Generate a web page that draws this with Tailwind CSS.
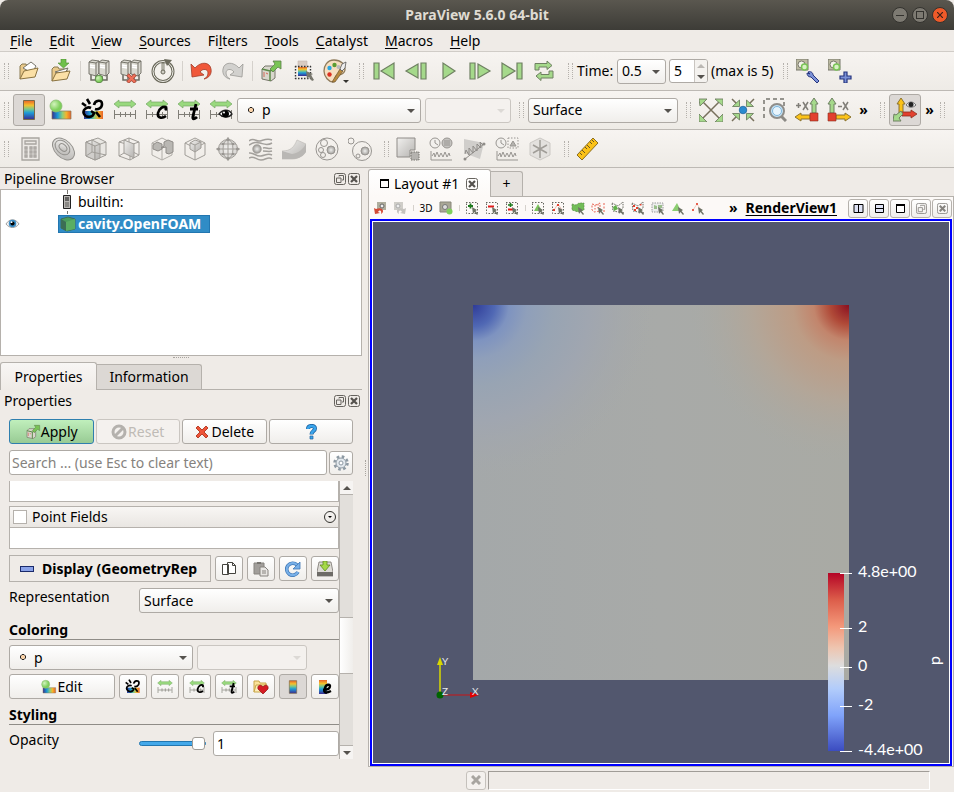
<!DOCTYPE html>
<html lang="en">
<head>
  <meta charset="UTF-8">
  <title>ParaView 5.6.0 64-bit</title>
  <script src="https://cdn.jsdelivr.net/npm/@tailwindcss/browser@4"></script>
</head>
<body class="min-h-screen flex flex-col bg-[#efebe7] text-black text-[14px] leading-5 font-['Noto_Sans','Open_Sans',sans-serif]">

  <!-- icon sprites -->
  <svg class="absolute size-0" aria-hidden="true">
    <defs>
      <linearGradient id="jet" x1="0" y1="0" x2="0" y2="1"><stop offset="0" stop-color="#e8622a"/><stop offset=".25" stop-color="#f5c02c"/><stop offset=".45" stop-color="#7ac98a"/><stop offset=".65" stop-color="#1d9bd8"/><stop offset="1" stop-color="#3b2a90"/></linearGradient>
      <linearGradient id="jetH" x1="0" y1="0" x2="1" y2="0"><stop offset="0" stop-color="#35308f"/><stop offset=".3" stop-color="#1a9ad6"/><stop offset=".55" stop-color="#8fce7a"/><stop offset=".75" stop-color="#f5b52c"/><stop offset="1" stop-color="#e8622a"/></linearGradient>
      <radialGradient id="ball" cx=".35" cy=".35"><stop offset="0" stop-color="#d3f3bd"/><stop offset="1" stop-color="#7fcf5c"/></radialGradient>
      <linearGradient id="gray" x1="0" y1="0" x2="1" y2="1"><stop offset="0" stop-color="#f1f0ee"/><stop offset="1" stop-color="#b5b3b0"/></linearGradient>
      <radialGradient id="grayBall"><stop offset="0" stop-color="#efefed"/><stop offset="1" stop-color="#a09e9b"/></radialGradient>
      <radialGradient id="grayGlobe"><stop offset="0" stop-color="#f4f3f1"/><stop offset="1" stop-color="#d6d4d1"/></radialGradient>
    </defs>

    <symbol id="folder" viewBox="0 0 24 24"><path d="M3 20V7l2-2h4l1 2h7v3" fill="#e9c98a" stroke="#8a7a50"/><path d="M6 9l8-6 5 4-4 7z" fill="#fff" stroke="#77756a"/><path d="M3 20l4-8 14-3-3 9z" fill="#fbe0a6" stroke="#8a7340"/></symbol>
    <symbol id="load" viewBox="0 0 24 24"><path d="M3 22V10l2-2h4l1 2h8v3" fill="#e9c98a" stroke="#8a7a50"/><path d="M6 13l13-4-4 7z" fill="#fff" stroke="#77756a"/><path d="M3 22l4-8 14-2-3 8z" fill="#fbe0a6" stroke="#8a7340"/><path d="M12 0h5v4h3l-5.500 5L9 4h3z" fill="#6fc04c" stroke="#4c8a30" stroke-width=".6"/></symbol>
    <symbol id="servers" viewBox="0 0 24 24"><g stroke="#6b6a60" stroke-width=".9"><path d="M2 3l3-2 7 1v12l-3 3-7-2z" fill="#d9d8cf"/><path d="M2 3l7 1v13M9 4l3-2" fill="none"/><path d="M12 3l3-2 7 1v12l-3 3-7-2z" fill="#d9d8cf"/><path d="M12 3l7 1v13M19 4l3-2" fill="none"/><path d="M3 6l5 1M3 8l5 1M13 6l5 1M13 8l5 1" stroke="#fff" stroke-width="1.500"/><path d="M4 16v5h5M20 16v5h-5M9 17v3M15 17v3" fill="none" stroke-width="1.500"/></g></symbol>
    <symbol id="connect" viewBox="0 0 24 24"><use href="#servers"/><circle cx="12" cy="20" r="3.800" fill="url(#ball)" stroke="#5c8a48"/></symbol>
    <symbol id="disconnect" viewBox="0 0 24 24"><use href="#servers"/><path d="M8.500 15.500l8 8M16.500 15.500l-8 8" stroke="#a34c3c" stroke-width="3.600"/><path d="M9 16l7 7M16 16l-7 7" stroke="#f0705a" stroke-width="2.200"/></symbol>
    <symbol id="timer" viewBox="0 0 24 24"><circle cx="12" cy="12.500" r="10" fill="#f4f2ed" stroke="#6b6a5c" stroke-width="3"/><circle cx="12" cy="12.500" r="10" fill="none" stroke="#efeee8"/><path d="M11 4h2v9h-2z" fill="#dad9d0" stroke="#6b6a5c" stroke-width=".8"/><circle cx="12" cy="13" r="2" fill="#cfcec4" stroke="#6b6a5c"/><path d="M13 0l8 1-5 6z" fill="#6b6a5c"/></symbol>
    <symbol id="undo" viewBox="0 0 24 24"><path d="M2 5l1 13 12-2-4-3c3-4 8-3 8 1 0 3-2 5-4 6 5-1 8-5 7-10C21 3 12 2 6 9z" fill="#f0583a" stroke="#a33c28" stroke-width=".8"/></symbol>
    <symbol id="redo" viewBox="0 0 24 24"><path d="M22 5l-1 13-12-2 4-3c-3-4-8-3-8 1 0 3 2 5 4 6-5-1-8-5-7-10C3 3 12 2 18 9z" fill="#d2d1ce" stroke="#9b9995" stroke-width=".8"/></symbol>
    <symbol id="apply" viewBox="0 0 24 24"><path d="M3 10l3-3h8l2 3v9l-4 3-9-2z" fill="#d9d7cd" stroke="#77766a"/><path d="M3 10l8 2 5-2M11 12v10" fill="none" stroke="#5c8a48" stroke-width="1.500"/><path d="M5 13v5M7 14l2 1" stroke="#d36a5a"/><path d="M14 2h8v8l-3-2-5 5-3-3 5-5z" fill="#79c455" stroke="#5a7d48" stroke-width=".8"/></symbol>
    <symbol id="selcolor" viewBox="0 0 24 24"><path d="M7 2h9v6H7z" fill="#d8cbc2" stroke="#c4b7ae" stroke-width=".6"/><path d="M7 8h9v9H7z" fill="url(#jet)"/><path d="M4 7.500h16M4 19.500h16M4.500 7v13M19.500 7v13" stroke="#333" stroke-width="1.400" stroke-dasharray="1.500 1.500"/><path d="M15 12l7 3-2 1 3 5-2 1-3-4-2 2z" fill="#77766c"/></symbol>
    <symbol id="palette" viewBox="0 0 24 24"><path d="M11 1C4 1 1 7 1 12c0 6 5 11 9 11 3 0 1-4 3-6 3-2 8 0 9-6C22 5 18 1 11 1z" fill="#f6dfc0" stroke="#8f7b5a" stroke-width="1.300"/><circle cx="6.500" cy="9" r="2.200" fill="#29a7e1"/><circle cx="11.500" cy="6" r="2.200" fill="#5d9d32"/><circle cx="6.500" cy="15.500" r="2.200" fill="#dc3020"/><circle cx="15.500" cy="8" r="2" fill="#bbb"/><path d="M9 23l8-13 3 2-8 11z" fill="#b88a3e" stroke="#6b5530" stroke-width=".7"/><path d="M17 10l2-5 4-2-1 6-3 3z" fill="#eee" stroke="#555" stroke-width=".8"/></symbol>

    <symbol id="first" viewBox="0 0 24 24"><g fill="#a5d98b" stroke="#6f8062" stroke-width="1.200"><path d="M2 4h5v16H2zM22 4v16L9 12z"/></g></symbol>
    <symbol id="prev" viewBox="0 0 24 24"><g fill="#a5d98b" stroke="#6f8062" stroke-width="1.200"><path d="M17 4h5v16h-5zM14 5v14L2 12z"/></g></symbol>
    <symbol id="play" viewBox="0 0 24 24"><path d="M7 4v16l12-8z" fill="#a5d98b" stroke="#6f8062" stroke-width="1.200"/></symbol>
    <symbol id="next" viewBox="0 0 24 24"><g fill="#a5d98b" stroke="#6f8062" stroke-width="1.200"><path d="M2 4h5v16H2zM10 5v14l12-7z"/></g></symbol>
    <symbol id="last" viewBox="0 0 24 24"><g fill="#a5d98b" stroke="#6f8062" stroke-width="1.200"><path d="M17 4h5v16h-5zM2 4v16l13-8z"/></g></symbol>
    <symbol id="loop" viewBox="0 0 24 24"><g fill="#a5d98b" stroke="#6f8062"><path d="M3 11V4.500h12V2l5 4.500-5 4V8H7v3zM21 12v7H9v2.500L4 17l5-4v2.500h8V12z"/></g></symbol>

    <symbol id="camera" viewBox="0 0 24 24"><path d="M0 0h12v11H0z" fill="#bdbba2" stroke="#77766a"/><circle cx="5.500" cy="5.500" r="3.500" fill="#f4f3ea" stroke="#77766a"/><circle cx="8.500" cy="8" r="3" fill="#d9f2c4" stroke="#79c455" stroke-width="1.500"/></symbol>
    <symbol id="camtool" viewBox="0 0 24 24"><use href="#camera"/><path d="M12 13c2-1 5 0 5 3l6 6-2 2-6-6c-3 0-4-2-4-4l3 1z" fill="#7b91d6" stroke="#26357f"/></symbol>
    <symbol id="camplus" viewBox="0 0 24 24"><use href="#camera"/><path d="M16 13h3v4h4v3h-4v4h-3v-4h-4v-3h4z" fill="#7b91d6" stroke="#26357f" stroke-width="1.200"/></symbol>

    <symbol id="legend" viewBox="0 0 24 24"><path d="M6.500 2.500h11v19h-11z" fill="url(#jet)" stroke="#7a6a48"/></symbol>
    <symbol id="editmap" viewBox="0 0 24 24"><path d="M3 13h19v8H3z" fill="url(#jetH)" stroke="#8a7a5a" stroke-width=".7"/><circle cx="7" cy="8" r="6" fill="url(#ball)" stroke="#8dbb76" stroke-width=".8"/></symbol>
    <symbol id="separate" viewBox="0 0 24 24"><path d="M3 13h19v8H3z" fill="url(#jetH)"/><path d="M10 10c-4-2-9 2-7 6s9 4 10-1l-3-2M13 7c1-5 8-6 8-1 0 4-4 6-7 5M9 6L6 1M15 14l4 5M5 8L1 5" fill="none" stroke="#000" stroke-width="2.600"/></symbol>
    <symbol id="range" viewBox="0 0 24 24"><path d="M1 6l5-4v2h12V2l5 4-5 4V8H6v2z" fill="#99d97e" stroke="#76a865" stroke-width=".7"/><path d="M1.500 12v9M22.500 12v9M2 16.500h20M7.500 14v5M12.500 14v5M17.500 14v5" stroke="#807e77" fill="none"/></symbol>
    <symbol id="rangec" viewBox="0 0 24 24"><use href="#range"/><path d="M22 10c-4-3-8 1-9 5-1 5 4 6 8 3" fill="none" stroke="#000" stroke-width="2.600"/><circle cx="21" cy="11" r="1.700"/></symbol>
    <symbol id="ranget" viewBox="0 0 24 24"><use href="#range"/><path d="M19 6l-3 12c-1 4 2 3 4 1M13 11h8" fill="none" stroke="#000" stroke-width="2.800"/></symbol>
    <symbol id="rangev" viewBox="0 0 24 24"><use href="#range"/><path d="M10 16c4-5 10-5 13 0-3 4-9 4-13 0z" fill="#fff" stroke="#222" stroke-width="1.300"/><circle cx="16.500" cy="16" r="3.500"/><circle cx="15" cy="14.500" r="1" fill="#fff"/></symbol>

    <symbol id="reset" viewBox="0 0 24 24"><path d="M4 4l16 16M20 4L4 20" stroke="#77705c" stroke-width="1.500"/><g fill="#a5d98b" stroke="#6f8062" stroke-width=".9"><path d="M0 1h8L1 8zM24 1v7l-8-7zM0 24v-8l8 8zM24 24h-8l8-8z"/></g></symbol>
    <symbol id="zoomdata" viewBox="0 0 24 24"><path d="M1 1l5 5M23 1l-5 5M1 23l5-5M23 23l-5-5" stroke="#77705c" stroke-width="1.500"/><g fill="#a5d98b" stroke="#6f8062" stroke-width=".9"><path d="M8.500 2v6.500H1.500zM15.500 2l7 6.500h-7zM8.500 22v-6.500H1.500zM15.500 22l7-6.500h-7z"/></g><circle cx="12" cy="12" r="3.800" fill="#2a8bd0" stroke="#1c5f96" stroke-width=".7"/></symbol>
    <symbol id="zoombox" viewBox="0 0 24 24"><path d="M1 20V1h20v8" fill="none" stroke="#77756f" stroke-width="1.500" stroke-dasharray="4 3"/><path d="M18 18l5 5" stroke="#8c8a85" stroke-width="3"/><circle cx="14" cy="13" r="7" fill="#c5e4f7" stroke="#8f8d89" stroke-width="2"/><circle cx="14" cy="13" r="4.500" fill="#e7f4fc" stroke="#7fb4da"/></symbol>
    <symbol id="plusx" viewBox="0 0 24 24"><path d="M19 0l4 6h-2v9h-4V6h-2z" fill="#a5d98b" stroke="#6f8062"/><path d="M0 19l6-4v2h9v4H6v2z" fill="#fbc218" stroke="#8a7330"/><path d="M15 15h8v8h-8z" fill="#e2402e" stroke="#8a3020" stroke-width=".6"/><path d="M1 7.500h5M3.500 5v5M8 4l5 8M13 4l-5 8" stroke="#807e78" stroke-width="1.500"/></symbol>
    <symbol id="minusx" viewBox="0 0 24 24"><path d="M5 0l4 6H7v9H3V6H1z" fill="#a5d98b" stroke="#6f8062"/><path d="M24 19l-6-4v2H9v4h9v2z" fill="#fbc218" stroke="#8a7330"/><path d="M1 15h8v8H1z" fill="#e2402e" stroke="#8a3020" stroke-width=".6"/><path d="M11 8.500h4M16 4l5 8M21 4l-5 8" stroke="#807e78" stroke-width="1.500"/></symbol>
    <symbol id="axes" viewBox="0 0 24 24"><path d="M8 0l4 6h-2v9H6V6H4z" fill="#fbc218" stroke="#8a7330"/><path d="M24 16l-6-4v2H9v4h9v2z" fill="#e2402e" stroke="#8a3020" stroke-width=".8"/><path d="M8 13l2 3-4 4 2 3H0l1-7 2 1z" fill="#a5d98b" stroke="#6f8062"/><path d="M13 7c3-4 7-4 10 0-3 3-7 3-10 0z" fill="#eee" stroke="#555" stroke-width=".8"/><circle cx="18" cy="6.500" r="2.500" fill="#222"/></symbol>

    <symbol id="calc" viewBox="0 0 24 24"><g fill="none" stroke="#a8a5a0" stroke-width="1.300"><path d="M4 1h17v22H4z" fill="#ece9e5"/><path d="M7 4h11v3H7zM7 10h2v2H7zM12 10h2v2h-2zM16 10h2v2h-2zM7 14h2v2H7zM12 14h2v2h-2zM16 14h2v2h-2zM7 18h2v2H7zM12 18h2v2h-2zM16 18h2v2h-2z"/></g></symbol>
    <symbol id="contour" viewBox="0 0 24 24"><g stroke="#918f8b" fill="url(#gray)"><ellipse cx="12.500" cy="12" rx="13" ry="8.500" transform="rotate(45 12.500 12)"/><ellipse cx="11.500" cy="10.500" rx="8.500" ry="6" transform="rotate(45 11.500 10.500)"/><ellipse cx="12" cy="10.500" rx="4.500" ry="3" transform="rotate(45 12 10.500)"/></g></symbol>
    <symbol id="clip" viewBox="0 0 24 24"><g stroke="#a09d98" fill="none"><path d="M2 5l12-4 8 4v13l-11 5-9-4z" fill="#e9e7e3"/><path d="M2 5l9 4v14L2 19z" fill="#d0cecb"/><path d="M2 5l6-2 8 4v14l-5 2V9z" fill="url(#gray)"/><path d="M11 9l11-4M8 3v12l14 3M8 15l-6 4"/></g></symbol>
    <symbol id="slice" viewBox="0 0 24 24"><g stroke="#a09d98" fill="none"><path d="M2 5l10-4 10 4v13l-9 5-11-4z"/><path d="M2 5l11 3 9-3M13 8v15M12 1v12l10 5M12 13L2 19"/><path d="M7 3l10 4v14L7 16z" fill="url(#gray)"/></g></symbol>
    <symbol id="threshold" viewBox="0 0 24 24"><g stroke="#8f8c88" fill="none"><path d="M2 6l10-5 10 5v12l-10 5-10-5zM12 10v13M2 6l10 4 10-4" stroke="#b0ada8"/><path d="M3 8l4-3 5 2v5l-4 2-5-2zM11 11l3-2V5l4-2 5 2v10l-4 2-3-1v-6z" fill="#b9b7b3"/></g></symbol>
    <symbol id="subset" viewBox="0 0 24 24"><g stroke="#a09d98" fill="none"><path d="M2 6l10-5 10 5v12l-10 5-10-5zM12 12v11M2 6l10 5 10-5"/><path d="M7 6l5-3 6 2v6l-6 4-5-3z" fill="url(#gray)"/><path d="M7 6l5 2 6-3M12 8v7"/></g></symbol>
    <symbol id="glyph" viewBox="0 0 24 24"><g stroke="#a09d98" fill="none"><circle cx="12" cy="12" r="9.500" fill="url(#grayGlobe)"/><ellipse cx="12" cy="12" rx="5" ry="9.500"/><path d="M0 12h24M12 0v24M4 7h16M4 17h16"/></g><g fill="#989591"><circle cx="12" cy="2.500" r="1.600"/><circle cx="12" cy="21.500" r="1.600"/><circle cx="2.500" cy="12" r="1.600"/><circle cx="21.500" cy="12" r="1.600"/><circle cx="7" cy="7" r="1.300"/><circle cx="17" cy="7" r="1.300"/><circle cx="7" cy="17" r="1.300"/><circle cx="17" cy="17" r="1.300"/></g></symbol>
    <symbol id="stream" viewBox="0 0 24 24"><g stroke="#a3a09c" stroke-width="1.500" fill="none"><path d="M0 4c5-4 7 1 11 0s7-3 12-1M0 8c5-3 7-3 11-2s7 3 12 0M0 16c5-1 7 4 12 3s7-3 11-1M0 21c5-3 7 2 12 2s7-4 11-1M14 11c4-1 6 2 9 0M14 14c4 0 6 1 9 0"/><circle cx="8" cy="12" r="4" fill="url(#grayBall)"/></g></symbol>
    <symbol id="warp" viewBox="0 0 24 24"><path d="M0 14c9 0 12-4 15-11l9 4v7c-4 6-9 8-14 8H0z" fill="url(#gray)" stroke="#c0bdb9" stroke-width=".7"/><path d="M0 14l10 3c7-1 11-5 14-10v8c-4 6-9 7-14 7H0z" fill="#b9b7b4"/></symbol>
    <symbol id="group" viewBox="0 0 24 24"><g stroke="#989591" fill="none"><circle cx="12" cy="12" r="11"/><circle cx="9" cy="6" r="3.500"/><circle cx="6" cy="13" r="2.500"/><circle cx="16" cy="13" r="4" fill="url(#grayBall)"/><circle cx="8" cy="18" r="2.500"/></g></symbol>
    <symbol id="extract" viewBox="0 0 24 24"><g stroke="#989591" fill="none"><circle cx="14" cy="14" r="9.500"/><circle cx="3" cy="4" r="3"/><circle cx="17" cy="14" r="4" fill="url(#grayBall)"/><circle cx="10" cy="19" r="2"/></g></symbol>
    <symbol id="exsel" viewBox="0 0 24 24"><path d="M1 1h18v12h-5v7H1z" fill="url(#gray)" stroke="#8f8c88"/><path d="M15 15h8v8h-8z" fill="#b5b3af" stroke="#77746f" stroke-dasharray="1.500 1"/></symbol>
    <symbol id="plott" viewBox="0 0 24 24"><g stroke="#989591" fill="none"><circle cx="6" cy="6" r="5" fill="#f2f0ed"/><path d="M6 3v3l3 2M2 14v9h21"/><circle cx="18" cy="6" r="5" fill="#c4c2bf"/><path d="M15 4h6M15 6h6M15 8h6"/><path d="M3 19l2-3 1 4 2-5 2 5 2-4 2 4 2-5 2 5 2-4 1 3"/></g></symbol>
    <symbol id="plotline" viewBox="0 0 24 24"><path d="M2 2l20 4-4 16L2 16z" fill="#d0cecb"/><path d="M3 22L22 7" stroke="#8f8c88"/><path d="M3 17l1-4 3 5v-7l4 5v-7l4 5V7l4 4-1-6 3 3" fill="none" stroke="#8f8c88"/><circle cx="3" cy="22" r="1.500" fill="#8f8c88"/><circle cx="22" cy="7" r="1.500" fill="#8f8c88"/></symbol>
    <symbol id="plotsel" viewBox="0 0 24 24"><g stroke="#989591" fill="none"><circle cx="6" cy="6" r="5" fill="#f2f0ed"/><path d="M6 3v3l3 2M2 14v9h21"/><path d="M13 1h10v10H13z" stroke-dasharray="1.500 1.500"/><path d="M15 9l3-5 3 5z" fill="#b5b3af"/><path d="M3 19l2-3 1 4 2-5 2 5 2-4 2 4 2-5 2 5 2-4 1 3"/></g></symbol>
    <symbol id="probe" viewBox="0 0 24 24"><path d="M2 6l10-5 10 5v12l-10 5-10-5z" fill="#e3e1de" stroke="#cbc8c4"/><path d="M12 3v18M5 8l14 8M19 8L5 16" stroke="#a09d98" stroke-width="1.500"/></symbol>
    <symbol id="ruler" viewBox="0 0 24 24"><path d="M1 18L17 1l5 5L6 23z" fill="#fbc218" stroke="#8a6d20"/><path d="M4 16l2 2M6 13l3 3M9 10l2 2M11 8l3 3M14 5l2 2M16 3l2 2" stroke="#6b5520"/></symbol>

    <symbol id="float" viewBox="0 0 12 12"><g fill="none" stroke="#66635e"><rect x=".5" y=".5" width="11" height="11" rx="2"/><path d="M5 3.500V2.500h4.500V7H8M2.500 5H7v4.500H2.500z"/></g></symbol>
    <symbol id="close" viewBox="0 0 12 12"><rect x=".5" y=".5" width="11" height="11" rx="2" fill="none" stroke="#66635e"/><path d="M3 3l6 6M9 3L3 9" stroke="#55524e" stroke-width="2.200"/></symbol>
    <symbol id="down" viewBox="0 0 8 4"><path d="M0 0h8L4 4z"/></symbol>
    <symbol id="up" viewBox="0 0 8 4"><path d="M0 4h8L4 0z"/></symbol>

    <!-- view toolbar -->
    <symbol id="arrow" viewBox="0 0 14 14"><path d="M7 6l5 3-1.500 1 2.500 3-1 1-2.500-3L8 13z" fill="#6d7265"/></symbol>
    <symbol id="camundo" viewBox="0 0 14 14"><path d="M4 1h9v8H4z" fill="#b0ae9e"/><circle cx="9" cy="5" r="2" fill="#eee" stroke="#666"/><path d="M1 7l1 6 5-1-2-1c2-3 4-1 3 2 4-2 2-8-5-5z" fill="#d24a36"/></symbol>
    <symbol id="camredo" viewBox="0 0 14 14"><path d="M1 1h9v8H1z" fill="#cfcdc8"/><circle cx="5" cy="5" r="2" fill="#eee" stroke="#aaa"/><path d="M13 7l-1 6-5-1 2-1c-2-3-4-1-3 2-4-2-2-8 5-5z" fill="#c4c2be"/></symbol>
    <symbol id="camlink" viewBox="0 0 14 14"><path d="M1 1h11v10H1z" fill="#a9a796" stroke="#88877b"/><circle cx="6" cy="6" r="2.500" fill="#ddd" stroke="#777"/><circle cx="10.500" cy="10.500" r="3" fill="#7fcf5c"/></symbol>
    <symbol id="dash" viewBox="0 0 14 14"><path d="M1 1.500h11.500v11H1.500V1" fill="none" stroke="#66665e" stroke-dasharray="1.500 1.500"/></symbol>
    <symbol id="seladd" viewBox="0 0 14 14"><use href="#dash"/><path d="M3 5h5M5.500 2.500v5" stroke="#1e7a1e" stroke-width="1.800"/><use href="#arrow"/></symbol>
    <symbol id="selsub" viewBox="0 0 14 14"><use href="#dash"/><path d="M3 5.500h6" stroke="#e21a1a" stroke-width="2"/><use href="#arrow"/></symbol>
    <symbol id="seltog" viewBox="0 0 14 14"><use href="#dash"/><path d="M3 4h5M5.500 2v4" stroke="#1e7a1e" stroke-width="1.600"/><path d="M3 8.500h6" stroke="#e21a1a" stroke-width="2"/><use href="#arrow"/></symbol>
    <symbol id="selcells" viewBox="0 0 14 14"><use href="#dash"/><path d="M3 10l4-7 4 7z" fill="#7dc45d"/><use href="#arrow"/></symbol>
    <symbol id="selpts" viewBox="0 0 14 14"><use href="#dash"/><path d="M3 9l4-6 4 6" fill="none" stroke="#f0bdb2"/><path d="M2 8h2v2H2zM6 3h2v2H6z" fill="#e2402e"/><use href="#arrow"/></symbol>
    <symbol id="frcells" viewBox="0 0 14 14"><path d="M1 3l4 1 3-2h5v7l-6 2-6-2z" fill="#72bd58" stroke="#5c8a48" stroke-width=".7" stroke-dasharray="2 1"/><use href="#arrow"/></symbol>
    <symbol id="frpts" viewBox="0 0 14 14"><path d="M1 3l4 1 4-2v8l-6 1-2-2zM13 2v9" fill="none" stroke="#e8604e" stroke-dasharray="2 1.500"/><path d="M4 4v5M7 3v5" stroke="#e8604e" stroke-dasharray="1.500 1.500"/><use href="#arrow"/></symbol>
    <symbol id="polycells" viewBox="0 0 14 14"><path d="M1 2l6 3 5-4v6l-3 3 4 2-11-2z" fill="none" stroke="#66665e" stroke-dasharray="1.500 1"/><path d="M2 6l3-2 2 4-4 2z" fill="#5fb048"/><use href="#arrow"/></symbol>
    <symbol id="polypts" viewBox="0 0 14 14"><path d="M1 2l6 3 5-4v6l-3 3 4 2-11-2z" fill="none" stroke="#66665e" stroke-dasharray="1.500 1"/><path d="M2 4h2v2H2zM5 6h2v2H5zM3 8h2v2H3zM9 3h1.500v1.500H9z" fill="#e2402e"/><use href="#arrow"/></symbol>
    <symbol id="selblock" viewBox="0 0 14 14"><path d="M1 2h11v9H1z" fill="#eee" stroke="#999" stroke-dasharray="1.500 1"/><path d="M3 4l3 1v3H3zM7 4h4v3H7z" fill="#9bbf8c"/><use href="#arrow"/></symbol>
    <symbol id="hovcell" viewBox="0 0 14 14"><path d="M1 10l5-8 4 8z" fill="#8bcd70"/><use href="#arrow"/></symbol>
    <symbol id="hovpt" viewBox="0 0 14 14"><path d="M2 9l4-6 4 6" fill="none" stroke="#f0cdc5"/><path d="M1 8h2v2H1zM5 2h2v2H5z" fill="#e8604e"/><use href="#arrow"/></symbol>

    <!-- properties panel -->
    <symbol id="noentry" viewBox="0 0 16 16"><circle cx="8" cy="8" r="6" fill="none" stroke="#b4b1ad" stroke-width="3"/><path d="M4 12l8-8" stroke="#b4b1ad" stroke-width="3"/></symbol>
    <symbol id="delete" viewBox="0 0 16 16"><path d="M4 2l4 4 4-4 2 2-4 4 4 4-2 2-4-4-4 4-2-2 4-4-4-4z" fill="#ee5438" stroke="#b8402a"/></symbol>
    <symbol id="help" viewBox="0 0 16 16"><path d="M5 5c0-4 7-4 7-.5C12 7 8.500 7 8.500 10.500" fill="none" stroke="#1c62a0" stroke-width="4"/><path d="M5 5c0-4 7-4 7-.5C12 7 8.500 7 8.500 10" fill="none" stroke="#3aa5ec" stroke-width="2.600"/><path d="M7 12h3v3H7z" fill="#3aa5ec" stroke="#1c62a0" stroke-width=".7"/></symbol>
    <symbol id="gear" viewBox="0 0 16 16"><circle cx="8" cy="8" r="6.500" fill="none" stroke="#8d99a3" stroke-width="2.500" stroke-dasharray="2.600 2.500"/><circle cx="8" cy="8" r="5" fill="#e3e9ee" stroke="#8d99a3"/><circle cx="8" cy="8" r="2" fill="#fff" stroke="#8d99a3"/></symbol>
    <symbol id="copy" viewBox="0 0 16 16"><g fill="#fff" stroke="#44433e"><path d="M1.500 3.500h6v10h-6zM6.500 1.500h5l3 3v8h-8z"/><path d="M11.500 1.500v3h3" fill="none"/></g></symbol>
    <symbol id="paste" viewBox="0 0 16 16"><path d="M1 2h10v11H1z" fill="#a19e9a" stroke="#86837f"/><path d="M4 1h4v2H4z" fill="#77746f"/><path d="M7 6h5l3 3v6H7z" fill="#e8e6e3" stroke="#86837f"/><path d="M9 10h4M9 12h4" stroke="#86837f"/></symbol>
    <symbol id="reload" viewBox="0 0 16 16"><path d="M13 11a6 6 0 1 1-1-7" fill="none" stroke="#3f77b5" stroke-width="3.600"/><path d="M13 11a6 6 0 1 1-1-7" fill="none" stroke="#78b0e8" stroke-width="2.200"/><path d="M15 1v7H8z" fill="#78b0e8" stroke="#3f77b5" stroke-width=".8"/></symbol>
    <symbol id="save" viewBox="0 0 16 16"><path d="M2 1h12l2 10v4H0v-4z" fill="#dddbd6" stroke="#77746f" stroke-width=".8"/><path d="M0 11h16v4H0z" fill="#6d6b67"/><path d="M6 0h4v4h3l-5 6-5-6h3z" fill="#a5d948" stroke="#5f8a20" stroke-width=".8"/></symbol>
    <symbol id="fav" viewBox="0 0 16 16"><path d="M1 13V2h5l1 2h6v3" fill="#fbe39a" stroke="#c8a548"/><path d="M1 13l2-7h11l-2 7z" fill="#fdedb8" stroke="#c8a548"/><path d="M10 15L5 10c-1-4 3-5 5-2 2-3 6-2 5 2z" fill="#d51c24" stroke="#8f1016" stroke-width=".7"/></symbol>
    <symbol id="legende" viewBox="0 0 16 16"><path d="M2 1h8v14H2z" fill="url(#jet)"/><path d="M6 11c4 0 7-1 7-4 0-2-4-2-5 2-2 4 0 6 6 3" fill="none" stroke="#000" stroke-width="2.400"/></symbol>
    <symbol id="dot" viewBox="0 0 8 8"><path d="M3 1.500h2L6.500 3v2L5 6.500H3L1.500 5V3z" fill="#fbd3a8" stroke="#222"/></symbol>
    <symbol id="eye" viewBox="0 0 16 12"><path d="M1 6c4-6 10-6 14 0-4 5-10 5-14 0z" fill="#f4f4f4" stroke="#999"/><circle cx="8" cy="5.500" r="4" fill="#3a8cc4"/><circle cx="8" cy="5.500" r="2.200"/><circle cx="7" cy="4" r="1" fill="#fff"/></symbol>
    <symbol id="server" viewBox="0 0 8 14"><path d="M.5.5h7v13h-7z" fill="#b9b7b4" stroke="#222"/><path d="M2 3h4M2 5h4" stroke="#111"/><path d="M2 7h4v5H2z" fill="#8a8885"/></symbol>
    <symbol id="cube" viewBox="0 0 16 16"><path d="M1 3l7-2 7 2v10l-8 2-6-3z" fill="#4a9d5c" stroke="#3c6e5c"/><path d="M1 3l5 3v9l-5-3z" fill="#3c6e54"/><path d="M6 6l9-3v10l-9 2z" fill="#5aae62"/></symbol>
  </svg>

  <!-- title bar -->
  <header class="relative h-[30px] shrink-0 flex items-center justify-center rounded-t-lg bg-linear-to-b from-[#5a574f] to-[#3d3c37] text-[#dfdbd2] text-[14px] font-bold">
    <h1>ParaView 5.6.0 64-bit</h1>
    <div class="absolute right-[6px] flex gap-1">
      <button aria-label="Minimize" class="size-4 rounded-full bg-[#7d7a72] border border-[#33322e] flex items-center justify-center"><span class="w-2 h-px bg-[#33322e]"></span></button>
      <button aria-label="Maximize" class="size-4 rounded-full bg-[#7d7a72] border border-[#33322e] flex items-center justify-center"><span class="size-2 border border-[#33322e]"></span></button>
      <button aria-label="Close" class="size-4 rounded-full bg-[#ef5a29] border border-[#33322e] flex items-center justify-center"><svg class="size-[6px]" viewBox="0 0 6 6"><path d="M0 0l6 6M6 0L0 6" stroke="#3d2018" stroke-width="1.200"/></svg></button>
    </div>
  </header>

  <nav class="h-[22px] shrink-0 flex items-center gap-[17px] px-[10px] border-b border-[#d0ccc7]" id="menu"></nav>

  <!-- toolbars -->
  <div class="h-[39px] shrink-0 flex items-center border-b border-[#bdb9b4] bg-linear-to-b from-[#f7f4f1] to-[#eeebe6]">
    <div class="flex items-center" data-tools="open first"></div>
    <label for="time" class="w-10 whitespace-nowrap">Time:</label>
    <div class="relative w-[49px]">
      <select id="time" class="appearance-none w-full h-[25px] pl-1 border border-[#aeaaa5] rounded-[3px] bg-linear-to-b from-white to-[#f0eeeb]"><option>0.5</option></select>
      <svg class="absolute right-[6px] top-[11px] w-2 h-1 pointer-events-none fill-[#55524e]"><use href="#down"/></svg>
    </div>
    <div class="ml-[3px] w-[39px] h-6 flex border border-[#aeaaa5] rounded-[3px] bg-white overflow-hidden">
      <input aria-label="Time step" value="5" class="w-6 pl-1 outline-none">
      <div class="flex-1 flex flex-col border-l border-[#c9c5c0] bg-[#f4f2ef]">
        <button aria-label="Step up" class="flex-1 flex items-center justify-center"><svg class="w-2 h-1 fill-[#bab7b3]"><use href="#up"/></svg></button>
        <button aria-label="Step down" class="flex-1 flex items-center justify-center"><svg class="w-2 h-1 fill-[#55524e]"><use href="#down"/></svg></button>
      </div>
    </div>
    <span class="ml-[3px] w-16 whitespace-nowrap">(max is 5)</span>
    <div class="flex items-center" data-tools="shots"></div>
  </div>

  <div class="h-[39px] shrink-0 flex items-center border-b border-[#bdb9b4] bg-linear-to-b from-[#f7f4f1] to-[#eeebe6]">
    <div class="flex items-center" data-tools="color"></div>
    <div class="relative w-[184px]">
      <select aria-label="Color by" class="appearance-none w-full h-[25px] pl-6 border border-[#aeaaa5] rounded-[3px] bg-linear-to-b from-white to-[#f0eeeb]"><option>p</option></select>
      <svg class="absolute left-[10px] top-2 size-2 pointer-events-none"><use href="#dot"/></svg>
      <svg class="absolute right-[6px] top-[11px] w-2 h-1 pointer-events-none fill-[#55524e]"><use href="#down"/></svg>
    </div>
    <div class="relative ml-1 w-[86px]">
      <select aria-label="Component" disabled class="appearance-none w-full h-[25px] border border-[#cac6c1] rounded-[3px] bg-[#f4f1ee]"></select>
      <svg class="absolute right-[6px] top-[11px] w-2 h-1 pointer-events-none fill-[#dcd9d5]"><use href="#down"/></svg>
    </div>
    <div class="flex items-center" data-tools="gap"></div>
    <div class="relative w-[150px]">
      <select aria-label="Representation" class="appearance-none w-full h-[25px] pl-1 border border-[#aeaaa5] rounded-[3px] bg-linear-to-b from-white to-[#f0eeeb]"><option>Surface</option></select>
      <svg class="absolute right-[6px] top-[11px] w-2 h-1 pointer-events-none fill-[#55524e]"><use href="#down"/></svg>
    </div>
    <div class="flex items-center" data-tools="camera"></div>
  </div>

  <div class="h-[38px] shrink-0 flex items-center border-b border-[#bdb9b4] bg-linear-to-b from-[#f7f4f1] to-[#eeebe6]" data-tools="filters"></div>

  <main class="flex-1 flex">
    <!-- left docks -->
    <aside class="w-[362px] shrink-0 flex flex-col">
      <div class="h-[21px] flex items-center pl-1 pr-[2px]">
        <h2 class="flex-1">Pipeline Browser</h2>
        <button aria-label="Float pipeline browser"><svg class="size-3 mr-[2px]"><use href="#float"/></svg></button>
        <button aria-label="Close pipeline browser"><svg class="size-3"><use href="#close"/></svg></button>
      </div>
      <ul class="flex-1 min-h-[160px] bg-white border border-[#b5b1ac]">
        <li class="h-6 pl-[62px] flex items-center">
          <span class="flex flex-col items-center self-stretch"><span class="w-px h-1 bg-[#77746f]"></span><svg class="w-2 h-[14px] mt-px"><use href="#server"/></svg><span class="w-px flex-1 mt-[2px] bg-[#77746f]"></span></span>
          <span class="ml-[7px]">builtin:</span>
        </li>
        <li class="flex items-center h-5 pl-1">
          <svg class="w-[15px] h-3"><use href="#eye"/></svg>
          <span class="ml-[38px] h-[18px] w-[152px] pl-px flex items-center border border-[#2276b0] bg-[#308cc6] text-white font-bold"><svg class="size-4 mr-[2px] shrink-0"><use href="#cube"/></svg>cavity.OpenFOAM</span>
        </li>
      </ul>
      <div class="h-[6px] flex justify-center pt-px"><span class="w-4 border-t border-dotted border-[#a8a49f]"></span></div>

      <div class="flex items-end border-b border-[#b5b1ac]">
        <button class="-mb-px w-[97px] h-7 border border-b-0 border-[#b5b1ac] rounded-t-[3px] bg-linear-to-b from-[#f8f6f4] to-[#efebe7]">Properties</button>
        <button class="w-[105px] h-[25px] border border-l-0 border-b-0 border-[#b5b1ac] rounded-tr-[3px] bg-[#dcd8d4]">Information</button>
      </div>
      <div class="h-[22px] flex items-center pl-1 pr-[2px]">
        <h2 class="flex-1">Properties</h2>
        <button aria-label="Float properties"><svg class="size-3 mr-[2px]"><use href="#float"/></svg></button>
        <button aria-label="Close properties"><svg class="size-3"><use href="#close"/></svg></button>
      </div>

      <div class="mt-[7px] mx-[9px] grid grid-cols-4 gap-[2px]">
        <button class="h-[25px] flex items-center justify-center border border-[#2f7fae] rounded-[3px] bg-linear-to-b from-[#c0efbc] to-[#98cb94]"><svg class="size-4"><use href="#apply"/></svg>Apply</button>
        <button disabled class="h-[25px] flex items-center justify-center gap-px border border-[#cac6c1] rounded-[3px] bg-[#f4f1ee] text-[#bfbbb6]"><svg class="size-4"><use href="#noentry"/></svg>Reset</button>
        <button class="h-[25px] flex items-center justify-center gap-px border border-[#aeaaa5] rounded-[3px] bg-linear-to-b from-white to-[#f0eeeb]"><svg class="size-4"><use href="#delete"/></svg>Delete</button>
        <button aria-label="Help" class="h-[25px] flex items-center justify-center border border-[#aeaaa5] rounded-[3px] bg-linear-to-b from-white to-[#f0eeeb]"><svg class="size-4"><use href="#help"/></svg></button>
      </div>
      <div class="mt-[6px] mx-[9px] flex items-center gap-[2px]">
        <input aria-label="Search properties" placeholder="Search ... (use Esc to clear text)" class="flex-1 min-w-0 h-[25px] px-[2px] border border-[#aeaaa5] rounded-[3px] bg-white placeholder:text-[#85827e]">
        <button aria-label="Advanced" class="size-6 flex items-center justify-center border border-[#aeaaa5] rounded-[3px] bg-linear-to-b from-white to-[#f0eeeb]"><svg class="size-4"><use href="#gear"/></svg></button>
      </div>

      <!-- scrolled property list -->
      <div class="mt-[6px] mx-[9px] mb-2 flex">
        <div class="flex-1 min-w-0 pb-[3px]">
          <div class="h-[21px] border border-t-0 border-[#b5b1ac] bg-white"></div>
          <div class="mt-1 border border-[#b5b1ac] bg-white">
            <div class="h-[21px] pl-[3px] pr-[2px] flex items-center border-b border-[#b5b1ac] bg-linear-to-b from-[#f8f6f4] to-[#e9e6e2]">
              <input id="pointFields" type="checkbox" class="appearance-none size-[14px] border border-[#b5b1ac] bg-white">
              <label for="pointFields" class="ml-[5px] flex-1">Point Fields</label>
              <button aria-label="Sort" class="size-3 rounded-full border border-[#33322e] flex items-center justify-center"><svg class="w-1 h-[2px]"><use href="#down"/></svg></button>
            </div>
            <div class="h-5"></div>
          </div>
          <div class="mt-[6px] flex items-center gap-1">
            <button class="flex-1 min-w-0 h-[27px] pl-[10px] flex items-center overflow-hidden whitespace-nowrap border border-[#b5b1ac] font-bold"><span class="w-[14px] h-[6px] mr-2 shrink-0 border border-[#1b2a6b] bg-[#8aa2e8]"></span>Display (GeometryRep</button>
            <div class="flex gap-1" data-panel="display"></div>
          </div>
          <div class="mt-[6px] flex">
            <label for="repr" class="w-[130px] leading-[18px]">Representation</label>
            <div class="relative flex-1">
              <select id="repr" class="appearance-none w-full h-[25px] pl-1 border border-[#aeaaa5] rounded-[3px] bg-linear-to-b from-white to-[#f0eeeb]"><option>Surface</option></select>
              <svg class="absolute right-[6px] top-[11px] w-2 h-1 pointer-events-none fill-[#55524e]"><use href="#down"/></svg>
            </div>
          </div>
          <h3 class="mt-[7px] h-5 border-b border-[#8f8c87] font-bold">Coloring</h3>
          <div class="mt-[5px] flex gap-1">
            <div class="relative w-[184px]">
              <select aria-label="Coloring array" class="appearance-none w-full h-[25px] pl-6 border border-[#aeaaa5] rounded-[3px] bg-linear-to-b from-white to-[#f0eeeb]"><option>p</option></select>
              <svg class="absolute left-[10px] top-2 size-2 pointer-events-none"><use href="#dot"/></svg>
              <svg class="absolute right-[6px] top-[11px] w-2 h-1 pointer-events-none fill-[#55524e]"><use href="#down"/></svg>
            </div>
            <div class="relative w-[110px]">
              <select aria-label="Coloring component" disabled class="appearance-none w-full h-[25px] border border-[#cac6c1] rounded-[3px] bg-[#f4f1ee]"></select>
              <svg class="absolute right-[6px] top-[11px] w-2 h-1 pointer-events-none fill-[#dcd9d5]"><use href="#down"/></svg>
            </div>
          </div>
          <div class="mt-1 flex gap-1">
            <button class="flex-1 h-[25px] flex items-center justify-center border border-[#aeaaa5] rounded-[3px] bg-linear-to-b from-white to-[#f0eeeb]"><svg class="size-4"><use href="#editmap"/></svg>Edit</button>
            <div class="flex gap-1" data-panel="coloring"></div>
          </div>
          <h3 class="mt-[6px] h-5 border-b border-[#8f8c87] font-bold">Styling</h3>
          <div class="mt-[6px] flex items-center">
            <label for="opacity" class="w-[130px] self-start leading-[18px]">Opacity</label>
            <input id="opacity" type="range" value="100" class="appearance-none w-[67px] h-[14px] bg-transparent [&::-webkit-slider-runnable-track]:h-[5px] [&::-webkit-slider-runnable-track]:rounded-sm [&::-webkit-slider-runnable-track]:border [&::-webkit-slider-runnable-track]:border-[#2276b0] [&::-webkit-slider-runnable-track]:bg-[#43a8ea] [&::-webkit-slider-thumb]:appearance-none [&::-webkit-slider-thumb]:w-[13px] [&::-webkit-slider-thumb]:h-[13px] [&::-webkit-slider-thumb]:-mt-[5px] [&::-webkit-slider-thumb]:rounded-[3px] [&::-webkit-slider-thumb]:border [&::-webkit-slider-thumb]:border-[#a09c97] [&::-webkit-slider-thumb]:bg-white">
            <input aria-label="Opacity value" value="1" class="ml-[7px] flex-1 min-w-0 h-[25px] px-[3px] border border-[#aeaaa5] rounded-[3px] bg-white">
          </div>
        </div>
        <div class="w-[14px] flex flex-col border-l border-[#b5b1ac] bg-[#e2dfdb]">
          <button aria-label="Scroll up" class="h-[14px] flex items-center justify-center border-b border-[#b5b1ac] bg-[#f6f4f2]"><svg class="w-2 h-1 fill-[#55524e]"><use href="#up"/></svg></button>
          <div class="h-[122px]"></div>
          <div class="h-[57px] border-y border-[#b5b1ac] bg-linear-to-r from-white to-[#f0eeeb]"></div>
          <div class="flex-1"></div>
          <button aria-label="Scroll down" class="h-[14px] flex items-center justify-center border-t border-[#b5b1ac] bg-[#f6f4f2]"><svg class="w-2 h-1 fill-[#55524e]"><use href="#down"/></svg></button>
        </div>
      </div>
    </aside>

    <div class="w-[6px] shrink-0 flex items-center justify-center"><span class="h-4 border-l border-dotted border-[#a8a49f]"></span></div>

    <!-- render view -->
    <section class="flex-1 min-w-0 flex flex-col pt-px">
      <div class="flex items-end h-[27px]">
        <div class="relative z-10 -mb-px h-7 w-[123px] pl-[11px] flex items-center border border-b-0 border-[#b5b1ac] rounded-t-[3px] bg-linear-to-b from-white to-[#fcf9f7]">
          <span class="w-[9px] h-[9px] border border-t-2 border-black"></span><span class="ml-[5px] flex-1 whitespace-nowrap">Layout #1</span>
          <button aria-label="Close layout" class="mr-3"><svg class="size-3"><use href="#close"/></svg></button>
        </div>
        <button class="w-8 h-[25px] border border-l-0 border-b-0 border-[#b5b1ac] rounded-tr-[3px] bg-[#e6e2de]">+</button>
      </div>
      <div class="flex-1 flex flex-col border border-[#b5b1ac] bg-[#fcf9f7] px-px">
        <div class="h-[22px] flex items-center">
          <div class="flex items-center" data-tools="view"></div>
          <span class="flex-1 text-right font-bold pr-2">»</span>
          <a href="#" class="mr-[11px] font-bold underline underline-offset-2">RenderView1</a>
          <div class="flex gap-px" id="split"></div>
        </div>
        <div class="flex-1 border-2 border-[#0000fe] flex">
          <div class="flex-1 border border-white bg-[#52576e] flex">
            <svg class="w-full font-['Lato',sans-serif]" viewBox="0 0 576 541">
              <defs>
                <linearGradient id="field"><stop offset="0" stop-color="#a4a8a9"/><stop offset=".5" stop-color="#a8aaa8"/><stop offset="1" stop-color="#a9aaa4"/></linearGradient>
                <radialGradient id="low" gradientUnits="userSpaceOnUse" cx="100" cy="83" r="180"><stop offset="0" stop-color="#2e3b98"/><stop offset=".12" stop-color="#5068b4"/><stop offset=".2" stop-color="#7e93c0"/><stop offset=".3" stop-color="#8f9fba"/><stop offset=".45" stop-color="#98a4b3"/><stop offset=".65" stop-color="#a0a6b0"/><stop offset="1" stop-color="#a5a8aa" stop-opacity="0"/></radialGradient>
                <radialGradient id="high" gradientUnits="userSpaceOnUse" cx="476" cy="83" r="160"><stop offset="0" stop-color="#8a0f20"/><stop offset=".12" stop-color="#b04a38"/><stop offset=".22" stop-color="#c2856c"/><stop offset=".35" stop-color="#bd9c85"/><stop offset=".6" stop-color="#b3a698"/><stop offset="1" stop-color="#a9aaa4" stop-opacity="0"/></radialGradient>
                <linearGradient id="coolwarm" x1="0" y1="0" x2="0" y2="1"><stop offset="0" stop-color="#b40426"/><stop offset=".15" stop-color="#dc5d4a"/><stop offset=".3" stop-color="#f4987a"/><stop offset=".42" stop-color="#eec5b0"/><stop offset=".52" stop-color="#dddddd"/><stop offset=".65" stop-color="#b2ccfb"/><stop offset=".8" stop-color="#80a3fa"/><stop offset="1" stop-color="#3b4cc0"/></linearGradient>
              </defs>
              <g shape-rendering="crispEdges">
                <path d="M100 83h376v375H100z" fill="url(#field)"/>
                <path d="M100 83h376v375H100z" fill="url(#low)"/>
                <path d="M100 83h376v375H100z" fill="url(#high)"/>
                <path d="M455 351h16v178h-16z" fill="url(#coolwarm)"/>
                <path d="M467 351h12v1h-12zM467 406h12v1h-12zM467 445h12v1h-12zM467 484h12v1h-12zM467 529h12v1h-12z" fill="#fff"/>
              </g>
              <g fill="#fff" font-size="16">
                <text x="485" y="355">4.8e+00</text>
                <text x="485" y="410">2</text>
                <text x="485" y="449">0</text>
                <text x="485" y="488">-2</text>
                <text x="485" y="533">-4.4e+00</text>
                <text transform="translate(567 443) rotate(-90)">p</text>
              </g>
              <path d="M67 473V440" stroke="#d8d800" stroke-width="1.500"/><path d="M67 435l3 8h-6z" fill="#d8d800"/>
              <path d="M67 473h30" stroke="#c81414"/><path d="M106 473l-9 3v-6z" fill="#e00000"/>
              <circle cx="67" cy="473" r="3.500" fill="#006400"/>
              <g fill="#e4e6ec" font-size="10"><text x="69" y="443">Y</text><text x="69" y="473">Z</text><text x="99" y="473">X</text></g>
            </svg>
          </div>
        </div>
      </div>
    </section>
  </main>

  <footer class="h-[26px] shrink-0 pl-[466px] pr-6 flex items-center gap-[2px]">
    <button aria-label="Abort" class="w-5 h-[19px] flex items-center justify-center border border-[#c5c1bc] rounded-[3px] bg-[#f4f1ee]"><svg class="size-[10px]" viewBox="0 0 10 10"><path d="M1 1l8 8M9 1L1 9" stroke="#a8a5a0" stroke-width="3"/></svg></button>
    <div class="flex-1 h-[19px] border border-t-[#a09c97] border-l-[#a09c97] border-white"></div>
  </footer>

  <script>
    const menus = ["File", "Edit", "View", "Sources", "Filters", "Tools", "Catalyst", "Macros", "Help"];

    document.getElementById("menu").innerHTML = menus.map(name => {
      const key = name === "Filters" ? 2 : 0;
      return `<button>${name.slice(0, key)}<span class="underline underline-offset-2">${name[key]}</span>${name.slice(key + 1)}</button>`;
    }).join("");

    // "|" is a separator, ":" a toolbar handle, ">" the overflow arrow
    const toolbars = {
      "open first": "^ folder load | connect disconnect timer | undo redo | apply selcolor palette* : first prev play next last loop :",
      shots: ": camtool camplus",
      color: "^ legend! editmap separate range rangec ranget rangev",
      gap: ":",
      camera: ": reset zoomdata zoombox plusx minusx > : axes! > ;",
      filters: "^ calc contour clip slice threshold subset glyph stream warp group extract : exsel plott plotline plotsel probe : ruler",
      view: "camundo camredo | 3D camlink | seladd selsub seltog | selcells selpts frcells frpts polycells polypts selblock hovcell hovpt"
    };

    function tool(item, bar) {
      if (item === "^") return `<span class="w-[5px] h-4 ml-1 mr-1 border-x border-dotted border-[#b5b1ac]"></span>`;
      if (item === ";") return `<span class="w-[5px] h-4 ml-[2px] border-x border-dotted border-[#b5b1ac]"></span>`;
      if (item === ":") return `<span class="w-[5px] h-4 ml-2 ${bar === "filters" ? "mr-[2px]" : "mr-1"} border-x border-dotted border-[#b5b1ac]"></span>`;
      if (item === ">") return `<button aria-label="More tools" class="w-[17px] text-center font-bold">»</button>`;
      if (item === "|") return bar === "view"
        ? `<span class="w-px h-[6px] ml-[3px] mr-[2px] bg-[#d5d1cc]"></span>`
        : `<span class="w-px h-5 ml-[3px] mr-[2px] bg-[#d5d1cc]"></span>`;
      if (item === "3D") return `<button class="w-5 text-[10px]">3D</button>`;

      const id = item.replace(/[!*]/, "");
      if (bar === "view") return `<button aria-label="${id}" class="w-5 h-5 flex items-center justify-center"><svg class="size-[14px]"><use href="#${id}"/></svg></button>`;
      if (bar === "filters") return `<button aria-label="${id}" class="w-[33px] h-8 flex items-center justify-center"><svg class="size-6"><use href="#${id}"/></svg></button>`;
      if (item.endsWith("!")) return `<button aria-label="${id}" class="size-8 flex items-center justify-center border border-[#aeaaa5] rounded-[3px] bg-[#dcd8d5]"><svg class="size-6"><use href="#${id}"/></svg></button>`;
      const drop = item.endsWith("*") ? `<svg class="absolute right-[2px] bottom-1 w-[6px] h-[3px] fill-[#33322e]"><use href="#down"/></svg>` : "";
      return `<button aria-label="${id}" class="relative size-8 flex items-center justify-center"><svg class="size-6"><use href="#${id}"/></svg>${drop}</button>`;
    }

    document.querySelectorAll("[data-tools]").forEach(el => {
      const bar = el.dataset.tools;
      el.innerHTML = toolbars[bar].split(" ").map(item => tool(item, bar)).join("");
    });

    const panels = {
      display: ["copy", "paste", "reload", "save"],
      coloring: ["separate", "range", "rangec", "ranget", "fav", "legend", "legende"]
    };

    document.querySelectorAll("[data-panel]").forEach(el => {
      el.innerHTML = panels[el.dataset.panel].map(id => `
        <button aria-label="${id}" class="w-7 h-[25px] flex items-center justify-center border border-[#aeaaa5] rounded-[3px] ${id === "legend" ? "bg-[#dcd8d5]" : "bg-linear-to-b from-white to-[#f0eeeb]"}"><svg class="size-4"><use href="#${id}"/></svg></button>
      `).join("");
    });

    const splits = [
      ["Split horizontally", `<path d="M1 1.500h9v8H1zM5.500 2v8" fill="#dfe3f5" stroke="#000"/>`],
      ["Split vertically", `<path d="M1.500 1.500h8v8h-8zM2 5.500h8" fill="#dfe3f5" stroke="#000"/>`],
      ["Maximize view", `<path d="M1.500 2h8v7.500h-8z" fill="#fff" stroke="#000"/><path d="M1 2h9" stroke="#000" stroke-width="2"/>`],
      ["Float view", `<use href="#float" width="11" height="11" opacity=".7"/>`],
      ["Close view", `<use href="#close" width="11" height="11" opacity=".7"/>`]
    ];

    document.getElementById("split").innerHTML = splits.map(([label, shape]) => `
      <button aria-label="${label}" class="w-5 h-[19px] flex items-center justify-center border border-[#b5b1ac] rounded-[3px] bg-linear-to-b from-white to-[#f0eeeb]"><svg class="size-[11px]" viewBox="0 0 11 11">${shape}</svg></button>
    `).join("");
  </script>
</body>
</html>
